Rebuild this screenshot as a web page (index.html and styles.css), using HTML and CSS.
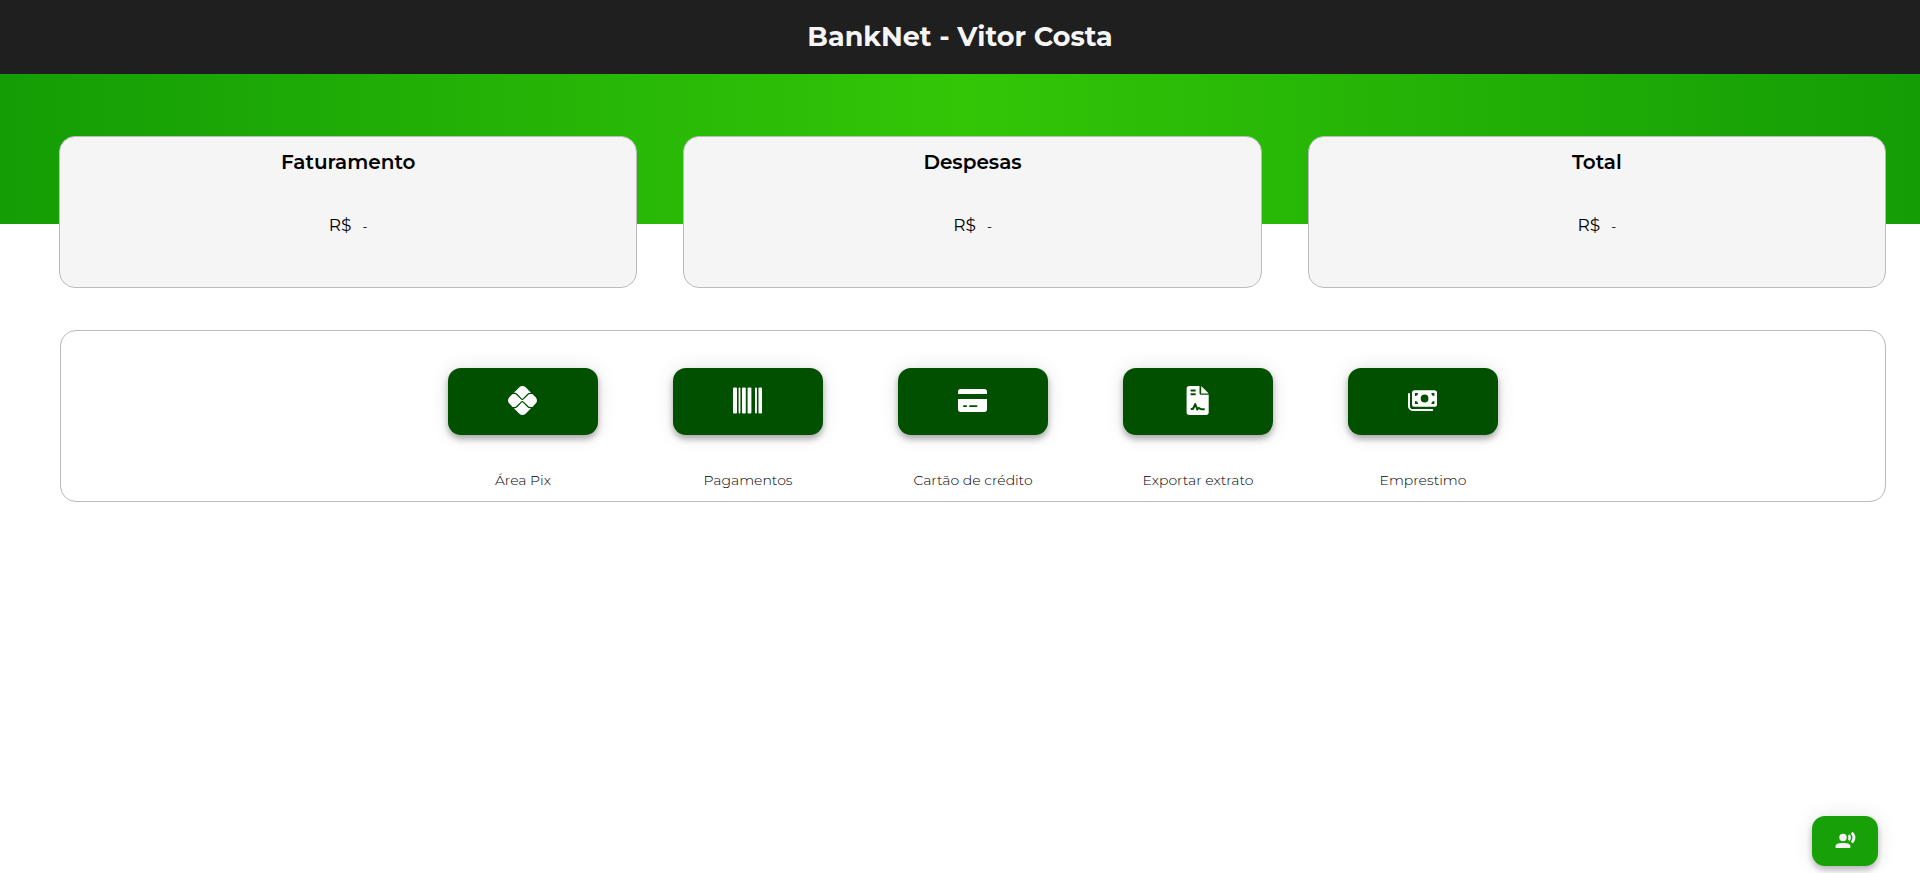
FILE: index.html
```html
<!DOCTYPE html>
<html lang="pt-BR">
<head>
<meta charset="utf-8">
<meta name="viewport" content="width=device-width, initial-scale=1">
<title>BankNet</title>
<link rel="stylesheet" href="styles.css">
</head>
<body>
<header class="topbar"><h1 class="topbar-title">BankNet - Vitor Costa</h1></header>
<main class="page">
  <section class="cards">
    <article class="card"><h2 class="card-title">Faturamento</h2><p class="card-value">R$ <span class="amount">-</span></p></article>
    <article class="card"><h2 class="card-title">Despesas</h2><p class="card-value">R$ <span class="amount">-</span></p></article>
    <article class="card"><h2 class="card-title">Total</h2><p class="card-value">R$ <span class="amount">-</span></p></article>
  </section>
  <section class="actions">
    <div class="action">
      <button class="action-button" type="button" aria-labelledby="pix">
        <svg class="icon" viewBox="0 0 512 512"><path d="M242.4 292.5C247.8 287.1 257.1 287.1 262.5 292.5L339.5 369.5C353.7 383.7 372.6 391.5 392.6 391.5H407.7L310.6 488.6C280.3 518.1 231.1 518.1 200.8 488.6L103.3 391.2H112.6C132.6 391.2 151.5 383.4 165.7 369.2L242.4 292.5zM262.5 218.9C256.1 224.4 247.9 224.5 242.4 218.9L165.7 142.2C151.5 127.1 132.6 120.2 112.6 120.2H103.3L200.7 22.76C231.1-7.586 280.3-7.586 310.6 22.76L407.8 119.9H392.6C372.6 119.9 353.7 127.7 339.5 141.9L262.5 218.9zM112.6 142.7C126.4 142.7 139.1 148.3 149.7 158.1L226.4 234.8C233.6 241.1 243 245.6 252.5 245.6C261.9 245.6 271.3 241.1 278.5 234.8L355.5 157.8C365.3 148.1 378.8 142.5 392.6 142.5H430.3L488.6 200.8C518.9 231.1 518.9 280.3 488.6 310.6L430.3 368.9H392.6C378.8 368.9 365.3 363.3 355.5 353.5L278.5 276.5C264.6 262.6 240.3 262.6 226.4 276.6L149.7 353.2C139.1 363 126.4 368.6 112.6 368.6H80.78L22.76 310.6C-7.586 280.3-7.586 231.1 22.76 200.8L80.78 142.7H112.6z"/></svg>
      </button>
      <span class="action-label" id="pix">Área Pix</span>
    </div>
    <div class="action">
      <button class="action-button" type="button" aria-labelledby="pag">
        <svg class="icon" viewBox="0 0 29 29"><rect x="0" y="1.5" width="4" height="26" rx="1"/><rect x="5.6" y="1.5" width="1.8" height="26" rx=".9"/><rect x="9" y="1.5" width="3.8" height="26" rx="1"/><rect x="14.6" y="1.5" width="3.8" height="26" rx="1"/><rect x="22" y="1.5" width="1.9" height="26" rx=".9"/><rect x="25.5" y="1.5" width="3.5" height="26" rx="1"/></svg>
      </button>
      <span class="action-label" id="pag">Pagamentos</span>
    </div>
    <div class="action">
      <button class="action-button" type="button" aria-labelledby="cartao">
        <svg class="icon" viewBox="0 0 29 29"><path fill-rule="evenodd" d="M0 8V5.7A2.7 2.7 0 0 1 2.7 3H26.3A2.7 2.7 0 0 1 29 5.7V8ZM0 13H29V23.2A2.7 2.7 0 0 1 26.3 25.9H2.7A2.7 2.7 0 0 1 0 23.2ZM5.9 19.2a.9.9 0 0 0 0 1.8H8.2a.9.9 0 0 0 0-1.8ZM12 19.2a.9.9 0 0 0 0 1.8H18.6a.9.9 0 0 0 0-1.8Z"/></svg>
      </button>
      <span class="action-label" id="cartao">Cartão de crédito</span>
    </div>
    <div class="action">
      <button class="action-button" type="button" aria-labelledby="extrato">
        <svg class="icon" viewBox="0 0 29 29"><path d="M6.3 0H16.5V7.2A1.6 1.6 0 0 0 18.1 8.8H25.7V26.3A2.7 2.7 0 0 1 23 29H6.3A2.7 2.7 0 0 1 3.6 26.3V2.7A2.7 2.7 0 0 1 6.3 0ZM18.2 0 25.7 7.4H18.2Z"/><path class="cutout" d="M7.6 4.6h5M7.6 8.2h5M7.8 23.1h.9c1.6 0 1.8-.8 3.5-5l2.2 5.4c.6-1.2 1.3-1.9 2.3-1.1.7.6 1.1.8 2.2.8h2.8"/></svg>
      </button>
      <span class="action-label" id="extrato">Exportar extrato</span>
    </div>
    <div class="action">
      <button class="action-button" type="button" aria-labelledby="emprestimo">
        <svg class="icon" viewBox="0 0 29 29"><path fill-rule="evenodd" d="M6.6 4.2H26.4A2.6 2.6 0 0 1 29 6.8V18.2A2.6 2.6 0 0 1 26.4 20.8H6.6A2.6 2.6 0 0 1 4 18.2V6.8A2.6 2.6 0 0 1 6.6 4.2ZM16.6 8.6a3.9 3.9 0 1 0 0 7.8 3.9 3.9 0 0 0 0-7.8ZM7 7V10A3 3 0 0 0 10 7ZM26.4 7H23.4A3 3 0 0 0 26.4 10ZM7 18H10A3 3 0 0 0 7 15ZM26.4 18V15A3 3 0 0 0 23.4 18Z"/><path class="line" d="M1 8V20.2A3.8 3.8 0 0 0 4.8 24H24.2"/></svg>
      </button>
      <span class="action-label" id="emprestimo">Emprestimo</span>
    </div>
  </section>
</main>
<button class="voice" type="button" aria-label="Assistente de voz">
  <svg class="voice-icon" viewBox="0 0 22 22"><circle cx="9" cy="7.5" r="3.7"/><path d="M1.6 18V16.1C1.6 13.6 5 12.9 9 12.9s7.4.7 7.4 3.2V18ZM13.8 6 15.6 4.2C17.4 6.4 17.4 8.7 15.6 10.9L13.8 9.1C14.6 8.1 14.6 7 13.8 6ZM16.8 3.7 18.7 1.8C22.3 5.4 22.3 9.8 18.7 13.4L16.8 11.5C19.1 9.1 19.1 6.1 16.8 3.7Z"/></svg>
</button>
</body>
</html>
```
FILE: styles.css
```css
* { box-sizing: border-box; }
body {
  margin: 0;
  min-height: 100vh;
  background: #fff;
  color: #000;
  font-family: Montserrat, Inter, "Liberation Sans", sans-serif;
}
.topbar {
  display: flex;
  align-items: center;
  justify-content: center;
  height: 74px;
  padding-bottom: 1px;
  background: #1f1f1f;
}
.topbar-title {
  margin: 0;
  color: #f5f5f5;
  font-size: 27px;
  font-weight: 700;
}
.page {
  padding: 62px 34px 40px 59px;
  background: linear-gradient(90deg, #149d05, #32c607, #149d05) top / 100% 150px no-repeat;
}
.cards {
  display: grid;
  grid-template-columns: repeat(3, 1fr);
  gap: 46px;
}
.card {
  display: flex;
  flex-direction: column;
  align-items: center;
  gap: 39px;
  min-height: 152px;
  padding: 13px 16px;
  border: 1px solid #bbb;
  border-radius: 16px;
  background: #f5f5f5;
}
.card-title {
  margin: 0;
  font-size: 20px;
  font-weight: 600;
  line-height: 24px;
}
.card-value {
  display: flex;
  align-items: baseline;
  gap: 11px;
  margin: 0;
  font-size: 17px;
  line-height: 24px;
}
.amount { font-size: 13px; font-weight: 400; }
.actions {
  display: flex;
  justify-content: center;
  gap: 75px;
  min-height: 172px;
  margin: 42px 0 0 1px;
  padding: 37px 16px 10px;
  border: 1px solid #bbb;
  border-radius: 16px;
}
.action {
  display: flex;
  flex-direction: column;
  align-items: center;
  gap: 35px;
  width: 150px;
}
.action-button {
  display: flex;
  align-items: center;
  justify-content: center;
  width: 100%;
  height: 67px;
  padding: 0 1px 2px 0;
  border: 0;
  border-radius: 13px;
  background: #005000;
  box-shadow: 0 4px 6px rgba(0, 0, 0, .3), 0 0 20px rgba(0, 0, 0, .1);
}
.action-label {
  color: #000;
  font-size: 14px;
  font-weight: 300;
  line-height: 20px;
}
.icon { width: 29px; height: 29px; fill: #fff; }
.cutout { fill: none; stroke: #005000; stroke-width: 2; stroke-linejoin: round; }
.line { fill: none; stroke: #fff; stroke-width: 2; stroke-linecap: round; }
.voice {
  position: fixed;
  right: 42px;
  bottom: 7px;
  display: flex;
  align-items: center;
  justify-content: center;
  width: 66px;
  height: 50px;
  padding: 0;
  border: 0;
  border-radius: 13px;
  background: #18a008;
  box-shadow: 0 4px 6px rgba(0, 0, 0, .25), 0 0 20px rgba(0, 0, 0, .1);
}
.voice-icon { width: 22px; height: 22px; fill: #f5f5f5; }
```
